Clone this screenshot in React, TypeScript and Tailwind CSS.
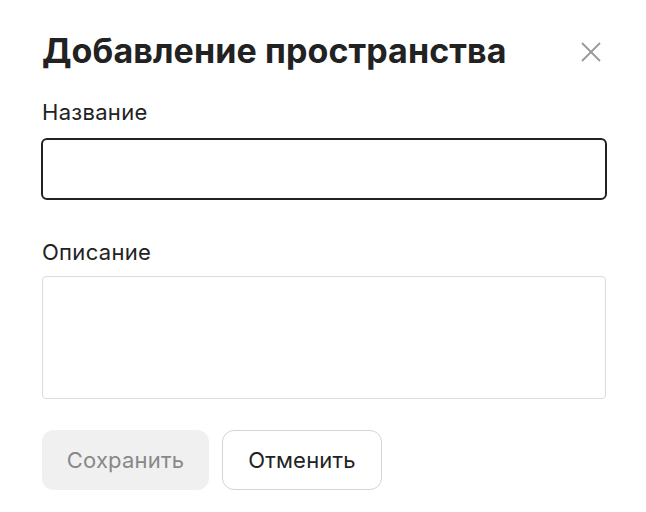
import React, { useState } from 'react';

const App = () => {
  const [name, setName] = useState('');
  const [description, setDescription] = useState('');

  return (
    <div className="w-[646px] h-[512px] bg-white font-['Inter',sans-serif] text-[#222]">
      <div className="px-[42px] pt-[28px]">
        <div className="flex items-start justify-between">
          <h2 className="text-[34px] leading-[46px] font-bold tracking-[0.1px] text-[#222]">Добавление пространства</h2>
          <button className="mt-[13px] mr-[2px] w-[22px] h-[22px] flex items-center justify-center text-[#999]">
            <svg width="22" height="22" viewBox="0 0 22 22" fill="none" stroke="currentColor" strokeWidth={1.8}>
              <path d="M2 2l18 18M20 2L2 20" />
            </svg>
          </button>
        </div>

        <label className="block mt-[24px] text-[22px] leading-[28px] tracking-[0.3px] text-[#222]">Название</label>
        <input
          type="text"
          value={name}
          onChange={e => setName(e.target.value)}
          className="block mt-[12px] w-[566px] -ml-[1px] h-[62px] border-2 border-[#222] rounded-[6px] px-4 outline-none"
        />

        <label className="block mt-[38px] text-[22px] leading-[28px] tracking-[0.3px] text-[#222]">Описание</label>
        <textarea
          value={description}
          onChange={e => setDescription(e.target.value)}
          className="block mt-[10px] w-[564px] h-[123px] border border-[#dcdcdc] rounded-[4px] px-4 py-3 outline-none resize-none"
        />

        <div className="flex gap-[13px] mt-[31px]">
          <button disabled className="w-[167px] h-[60px] rounded-[12px] bg-[#f0f0f0] text-[#888] text-[22px] tracking-[0.2px]">Сохранить</button>
          <button className="w-[160px] h-[60px] rounded-[12px] border border-[#d4d4d4] bg-white text-[#222] text-[22px] tracking-[0.2px]">Отменить</button>
        </div>
      </div>
    </div>
  );
};

export default App;
